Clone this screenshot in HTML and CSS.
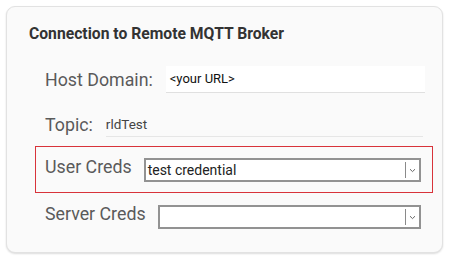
FILE: index.html
```html
<!DOCTYPE html>
<html>
<head>
<meta charset="utf-8">
<link rel="stylesheet" href="styles.css">
</head>
<body>
<div class="card">
  <div class="title">Connection to Remote MQTT Broker</div>
  <div class="rows">
    <div class="row row-host">
      <span class="label">Host Domain:</span>
      <div class="text-input">&lt;your URL&gt;</div>
    </div>
    <div class="row row-topic">
      <span class="label">Topic:</span>
      <div class="plain-input">rldTest</div>
    </div>
    <div class="row row-user highlighted">
      <span class="label label-raised">User Creds</span>
      <div class="select">
        <span class="select-value">test credential</span>
        <span class="select-sep"></span>
        <svg class="chev" width="7" height="5" viewBox="0 0 7 5"><path d="M1 1.2 L3.5 3.6 L6 1.2" fill="none" stroke="#666" stroke-width="1"/></svg>
      </div>
    </div>
    <div class="row row-server">
      <span class="label label-raised">Server Creds</span>
      <div class="select">
        <span class="select-value"></span>
        <span class="select-sep"></span>
        <svg class="chev" width="7" height="5" viewBox="0 0 7 5"><path d="M1 1.2 L3.5 3.6 L6 1.2" fill="none" stroke="#666" stroke-width="1"/></svg>
      </div>
    </div>
  </div>
</div>
</body>
</html>
```

FILE: styles.css
```css
html, body {
  margin: 0;
  padding: 0;
  background: #ffffff;
}
body {
  padding: 6px;
  font-family: Roboto, "Liberation Sans", sans-serif;
}
.card {
  width: 437px;
  height: 247px;
  box-sizing: border-box;
  background: #fafafa;
  border: 1px solid #e2e2e2;
  border-radius: 9px;
  box-shadow: 0 1px 2px rgba(0,0,0,0.14);
  padding: 18px 9px 0 22px;
}
.title {
  font-size: 15.7px;
  line-height: 18px;
  font-weight: 700;
  color: #333;
}
.rows {
  margin-top: 13px;
  margin-left: 6px;
  display: flex;
  flex-direction: column;
}
.row {
  display: flex;
  align-items: center;
  box-sizing: border-box;
  border: 1px solid transparent;
  padding: 0 9px;
}
.row-host { height: 46px; }
.row-topic { height: 44px; }
.row-user { height: 47px; }
.row-server { height: 47px; }
.highlighted {
  border-color: #d8333a;
}
.label {
  font-size: 17.8px;
  color: #5a5a5a;
  white-space: nowrap;
}
.label-raised {
  margin-bottom: 6px;
}
.text-input {
  margin-left: 13px;
  flex: 1;
  margin-right: -2px;
  height: 27px;
  box-sizing: border-box;
  background: #fff;
  border-bottom: 1px solid #e0e0e0;
  padding-left: 4px;
  font-size: 13px;
  line-height: 26px;
  color: #111;
}
.plain-input {
  margin-left: 13px;
  flex: 1;
  height: 26px;
  box-sizing: border-box;
  border-bottom: 1px solid #e6e6e6;
  font-size: 13.5px;
  line-height: 27px;
  color: #444;
}
.select {
  flex: 1;
  margin-left: 12px;
  margin-right: 2px;
  height: 24px;
  box-sizing: border-box;
  border: 2px solid #929292;
  background: #fff;
  display: flex;
  align-items: center;
}
.select-value {
  flex: 1;
  padding-left: 2px;
  font-size: 14px;
  color: #222;
}
.select-sep {
  width: 1px;
  height: 16px;
  background: #8a8a8a;
}
.chev {
  margin: 2px 3px 0 3px;
}
```
